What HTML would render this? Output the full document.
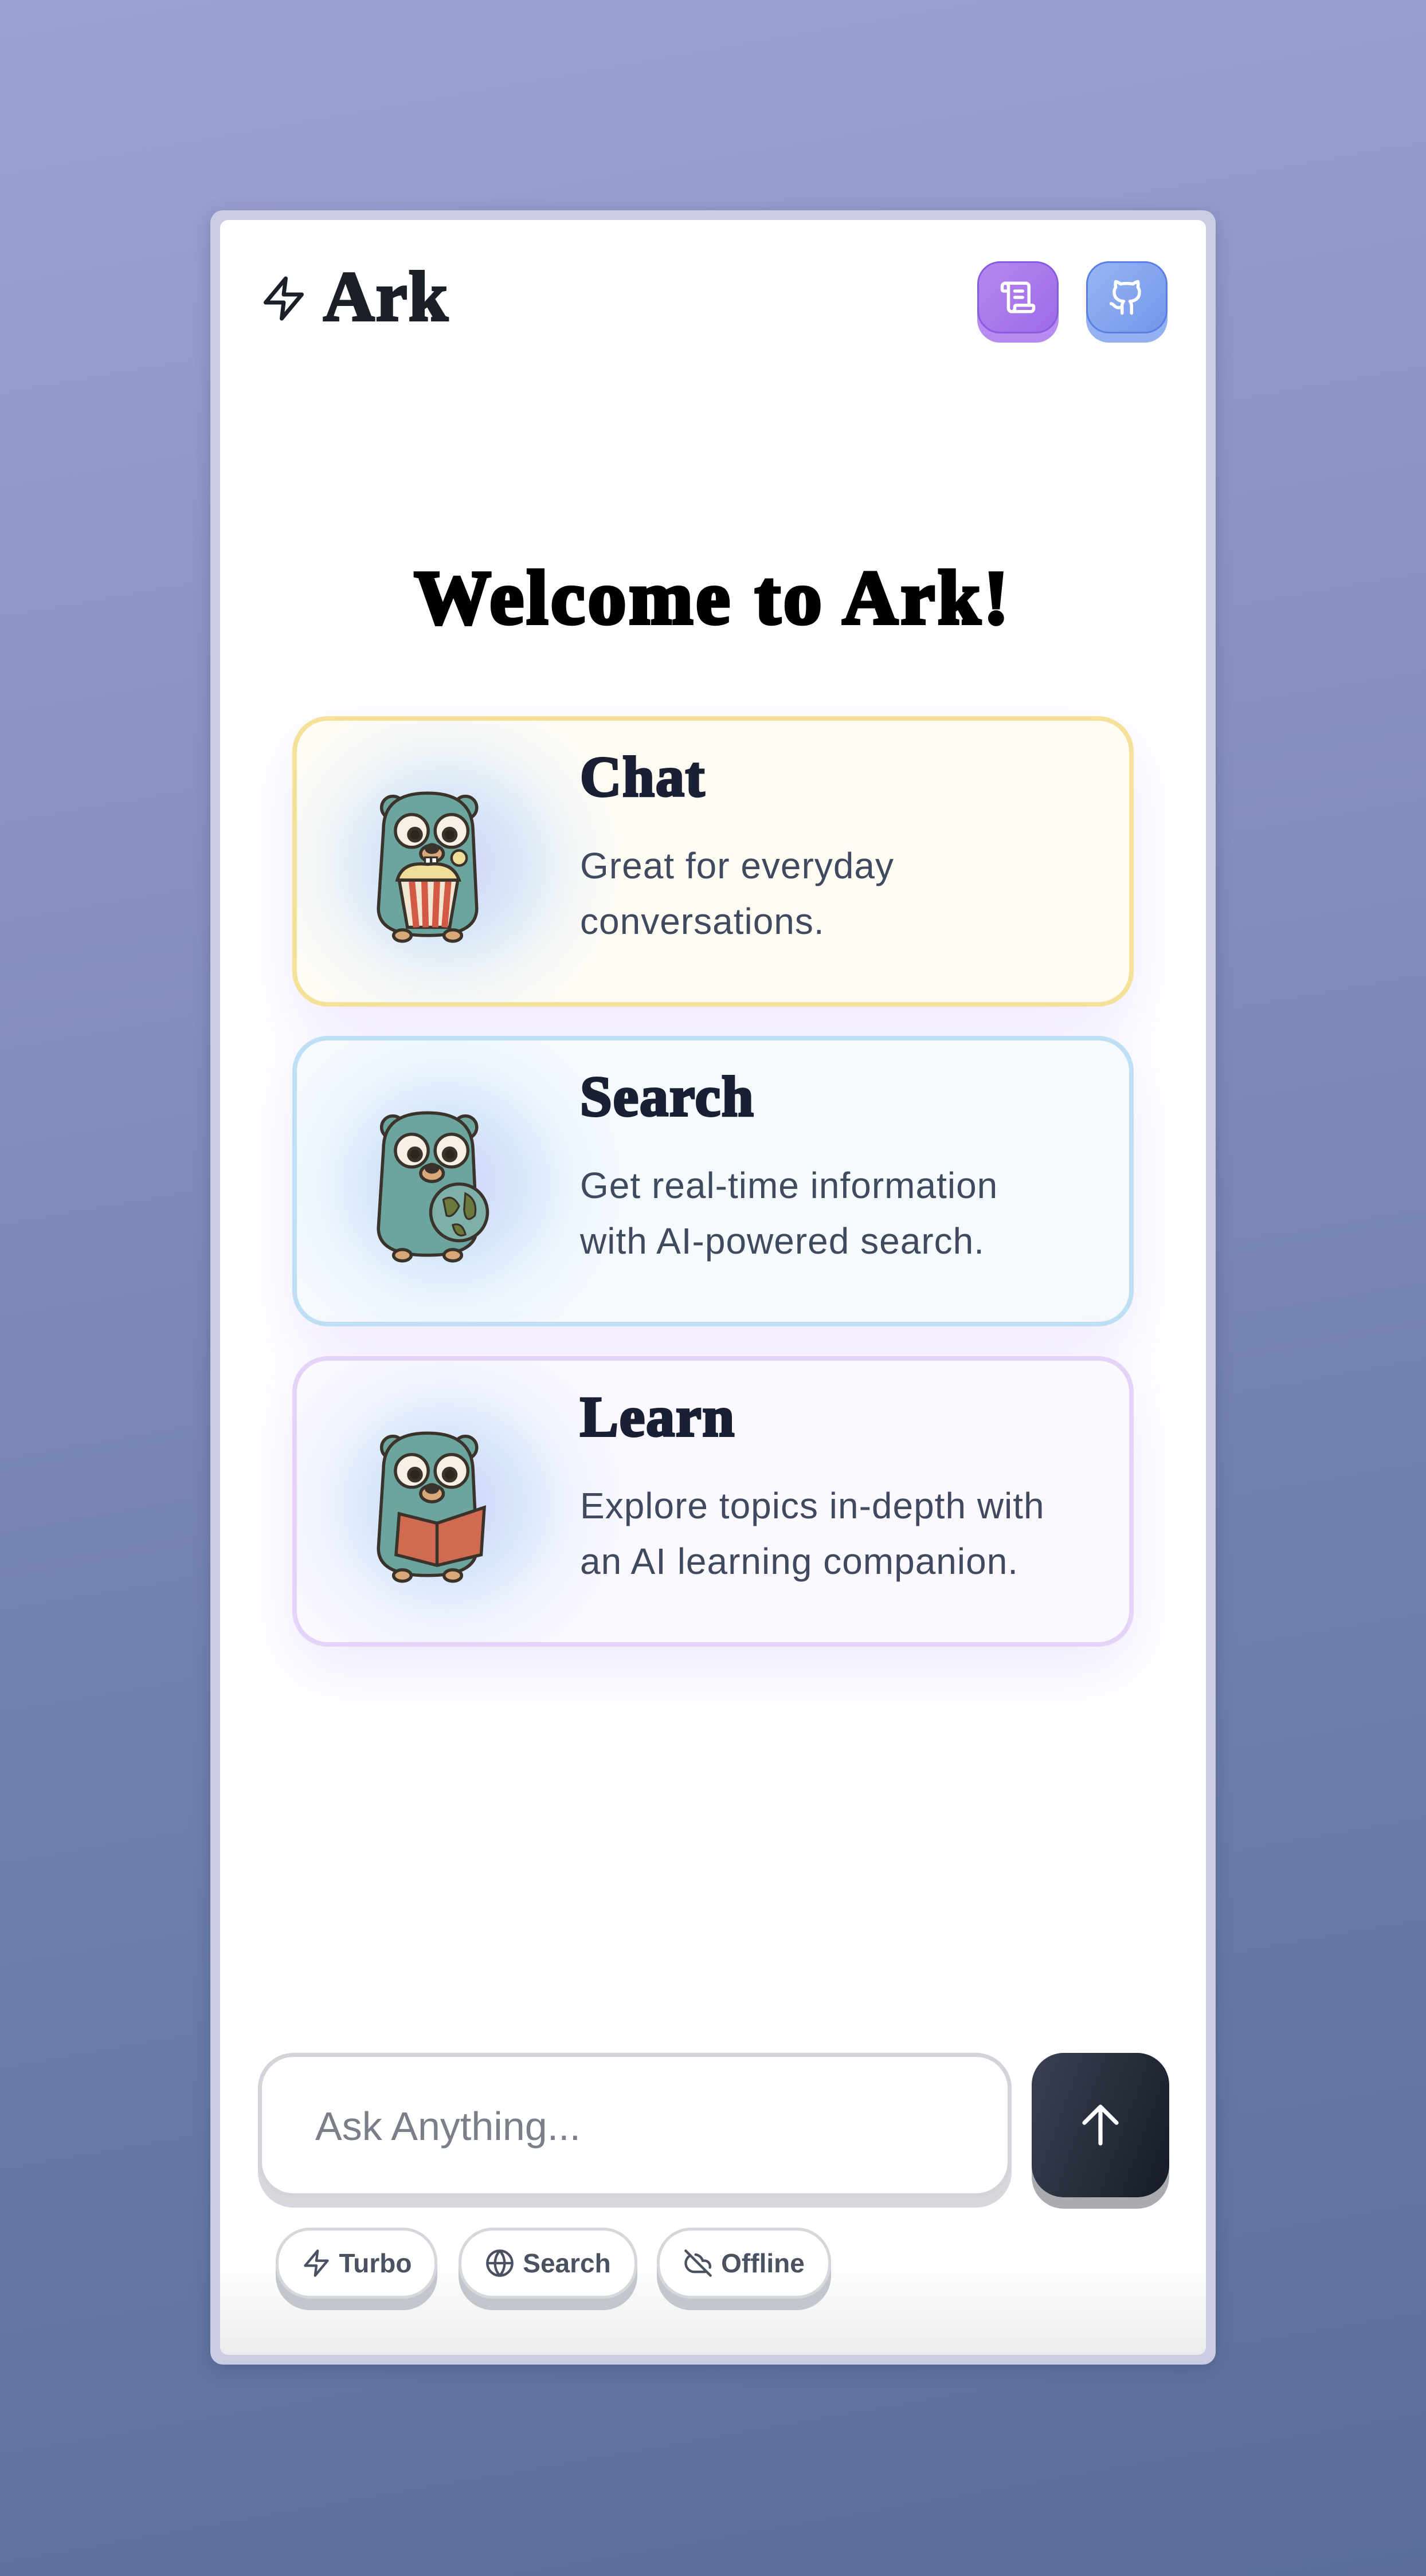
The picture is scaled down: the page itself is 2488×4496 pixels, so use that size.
<!DOCTYPE html>
<html><head><meta charset="utf-8"><style>
*{box-sizing:border-box;margin:0;padding:0}
html,body{width:2488px;height:4496px;overflow:hidden}
body{background:linear-gradient(170deg,#9ea2d2 0%,#8a92c3 30%,#6e7eae 65%,#5a6d99 100%);font-family:"Liberation Sans",sans-serif;position:relative}
.frame{position:absolute;left:367px;top:367px;width:1754px;height:3760px;border-radius:22px;background:#c9cce3;box-shadow:0 8px 30px rgba(40,50,90,.25)}
.inner{position:absolute;left:17px;top:17px;right:17px;bottom:17px;background:#fff;border-radius:14px;overflow:hidden}
.abs{position:absolute}
.logo{left:69px;top:72px;font-family:"Liberation Serif",serif;font-weight:bold;font-size:124px;color:#1b1f27;letter-spacing:2px;line-height:1;-webkit-text-stroke:4px #1b1f27}
.btn{position:absolute;top:72px;width:142px;height:142px;border-radius:40px}
.btn .face{position:absolute;left:0;top:0;width:142px;height:126px;border-radius:40px;display:flex;align-items:center;justify-content:center}
.welcome{left:0;right:0;top:582px;text-align:center;font-family:"Liberation Serif",serif;font-weight:bold;font-size:134px;color:#000;letter-spacing:5px;-webkit-text-stroke:6px #000}
.card{position:absolute;left:126px;width:1468px;height:507px;border-radius:62px;border:8px solid;overflow:hidden;box-shadow:0 40px 110px rgba(200,175,250,.28)}
.card .glow{position:absolute;left:-60px;top:-60px;width:640px;height:620px;background:radial-gradient(closest-side,rgba(205,205,250,.95) 0%,rgba(205,225,248,.75) 40%,rgba(225,238,252,.4) 70%,rgba(255,255,255,0) 100%)}
.card svg.g{position:absolute;left:118px;top:100px}
.card h2{position:absolute;left:494px;top:40px;font-family:"Liberation Serif",serif;font-weight:bold;font-size:100px;color:#1a2033;letter-spacing:2px;-webkit-text-stroke:4px #1a2033}
.card p{position:absolute;left:494px;top:205px;font-size:64px;line-height:97px;color:#404a5e;width:960px;letter-spacing:1px}
.input{position:absolute;left:66px;top:3199px;width:1315px;height:270px;border-radius:62px;background:#d6d8dd}
.input .f{position:absolute;left:0;top:0;width:1315px;height:252px;border-radius:62px;background:#fff;border:7px solid #d2d4da}
.input span{position:absolute;left:100px;top:88px;font-size:70px;color:#7a7f8a}
.send{position:absolute;left:1416px;top:3199px;width:240px;height:272px;border-radius:56px;background:#a9abb0}
.send .f{position:absolute;left:0;top:0;width:240px;height:252px;border-radius:56px;background:linear-gradient(110deg,#3a4252,#161b27);display:flex;align-items:center;justify-content:center}
.chip{position:absolute;top:3504px;height:144px;border-radius:60px;background:#c3c6cc}
.chip .f{position:absolute;left:0;top:0;right:0;height:124px;border-radius:60px;background:#fff;border:5px solid #d5d7dc;display:flex;align-items:center;justify-content:center;gap:14px;font-size:46px;font-weight:bold;color:#4a5262}
.bottomfade{position:absolute;left:0;right:0;bottom:0;height:160px;background:linear-gradient(#fff,#ececef)}
</style></head><body>
<div class="frame"><div class="inner">
 <div class="bottomfade"></div>
 <svg class="abs" style="left:69px;top:89px" width="84" height="96" viewBox="0 0 24 24" fill="none" stroke="#1b1f27" stroke-width="2" stroke-linejoin="round" stroke-linecap="round"><path d="M13 2L3 14h9l-1 8 10-12h-9l1-8z"/></svg>
 <div class="abs logo" style="left:180px">Ark</div>
 <div class="btn" style="left:1321px;background:#b98af0"><div class="face" style="background:linear-gradient(135deg,#b788ef,#9d6ae6);border:3px solid #8b5ae3">
  <svg width="66" height="66" viewBox="0 0 24 24" fill="none" stroke="#fff" stroke-width="2" stroke-linecap="round" stroke-linejoin="round"><path d="M15 12h-5M15 8h-5M19 17V5a2 2 0 0 0-2-2H4M8 21h12a2 2 0 0 0 2-2v-1a1 1 0 0 0-1-1H11a1 1 0 0 0-1 1v1a2 2 0 1 1-4 0V5a2 2 0 1 0-4 0v2a1 1 0 0 0 1 1h3"/></svg></div></div>
 <div class="btn" style="left:1511px;background:#94b1f2"><div class="face" style="background:linear-gradient(135deg,#95b6f3,#7596e9);border:3px solid #5a7fe6">
  <svg width="66" height="66" viewBox="0 0 24 24" fill="none" stroke="#fff" stroke-width="2" stroke-linecap="round" stroke-linejoin="round"><path d="M15 22v-4a4.8 4.8 0 0 0-1-3.5c3 0 6-2 6-5.5.08-1.250-.27-2.480-1-3.5.28-1.150.28-2.350 0-3.5 0 0-1 0-3 1.5-2.640-.5-5.360-.5-8 0C6 2 5 2 5 2c-.3 1.150-.3 2.350 0 3.5A5.4 5.4 0 0 0 4 9c0 3.5 3 5.5 6 5.5-.39.49-.68 1.050-.85 1.650S8.930 17.380 9 18v4M9 18c-4.510 2-5-2-7-2"/></svg></div></div>

 <div class="abs welcome">Welcome to Ark!</div>

 <div class="card" style="top:866px;border-color:#f5e29a;background:#fffcf4"><div class="glow"></div>
  <svg class="g" width="220" height="290" viewBox="0 0 200 260">
   <g stroke="#3a332b" stroke-width="5"><circle cx="45" cy="45" r="18" fill="#6ba59d"/><circle cx="160" cy="45" r="18" fill="#6ba59d"/>
   <path d="M30 80 Q30 22 100 22 Q170 22 172 80 L178 205 Q178 248 100 248 Q22 248 22 205 Z" fill="#6ba59d"/>
   <circle cx="75" cy="82" r="26" fill="#f6f1e4"/><circle cx="138" cy="82" r="26" fill="#f6f1e4"/>
   <circle cx="80" cy="88" r="10" fill="#2c2620"/><circle cx="135" cy="88" r="10" fill="#2c2620"/>
   <ellipse cx="107" cy="118" rx="18" ry="13" fill="#d9a878"/><ellipse cx="107" cy="110" rx="9" ry="6" fill="#3a332b"/>
   <rect x="96" y="124" width="9" height="12" fill="#fff" stroke-width="3"/><rect x="106" y="124" width="9" height="12" fill="#fff" stroke-width="3"/>
   <ellipse cx="60" cy="248" rx="14" ry="9" fill="#d9a878"/><ellipse cx="140" cy="248" rx="14" ry="9" fill="#d9a878"/>
   <path d="M55 160 L68 235 L135 235 L148 160 Z" fill="#f2e6d2"/>
   <path d="M75 160 L82 235 M95 160 L97 235 M115 160 L112 235 M133 160 L127 235" stroke="#d25a45" stroke-width="10"/>
   <path d="M52 160 Q60 130 100 135 Q140 130 150 160 Z" fill="#f1dd9a"/>
   <circle cx="150" cy="125" r="12" fill="#f1dd9a" stroke-width="4"/></g>
  </svg>
  <h2>Chat</h2><p>Great for everyday<br>conversations.</p></div>

 <div class="card" style="top:1424px;border-color:#bfe0f4;background:#f5fafe"><div class="glow"></div>
  <svg class="g" width="220" height="290" viewBox="0 0 200 260">
   <g stroke="#3a332b" stroke-width="5"><circle cx="45" cy="45" r="18" fill="#6ba59d"/><circle cx="160" cy="45" r="18" fill="#6ba59d"/>
   <path d="M30 80 Q30 22 100 22 Q170 22 172 80 L178 205 Q178 248 100 248 Q22 248 22 205 Z" fill="#6ba59d"/>
   <circle cx="75" cy="82" r="26" fill="#f6f1e4"/><circle cx="138" cy="82" r="26" fill="#f6f1e4"/>
   <circle cx="80" cy="88" r="10" fill="#2c2620"/><circle cx="135" cy="88" r="10" fill="#2c2620"/>
   <ellipse cx="107" cy="118" rx="18" ry="13" fill="#d9a878"/><ellipse cx="107" cy="110" rx="9" ry="6" fill="#3a332b"/>
   <ellipse cx="60" cy="248" rx="14" ry="9" fill="#d9a878"/><ellipse cx="140" cy="248" rx="14" ry="9" fill="#d9a878"/>
   <circle cx="150" cy="180" r="45" fill="#7fb0a8"/>
   <path d="M125 160 Q140 150 150 170 Q140 190 130 185 Z M160 150 Q180 160 175 185 Q160 200 158 175 Z M140 200 Q155 195 160 215 Q145 222 140 200 Z" fill="#6b7a3a" stroke-width="3"/></g>
  </svg>
  <h2>Search</h2><p>Get real-time information<br>with AI-powered search.</p></div>

 <div class="card" style="top:1983px;border-color:#e6d3fa;background:#fbf8ff"><div class="glow"></div>
  <svg class="g" width="220" height="290" viewBox="0 0 200 260">
   <g stroke="#3a332b" stroke-width="5"><circle cx="45" cy="45" r="18" fill="#6ba59d"/><circle cx="160" cy="45" r="18" fill="#6ba59d"/>
   <path d="M30 80 Q30 22 100 22 Q170 22 172 80 L178 205 Q178 248 100 248 Q22 248 22 205 Z" fill="#6ba59d"/>
   <circle cx="75" cy="82" r="26" fill="#f6f1e4"/><circle cx="138" cy="82" r="26" fill="#f6f1e4"/>
   <circle cx="80" cy="88" r="10" fill="#2c2620"/><circle cx="135" cy="88" r="10" fill="#2c2620"/>
   <ellipse cx="107" cy="118" rx="18" ry="13" fill="#d9a878"/><ellipse cx="107" cy="110" rx="9" ry="6" fill="#3a332b"/>
   <ellipse cx="60" cy="248" rx="14" ry="9" fill="#d9a878"/><ellipse cx="140" cy="248" rx="14" ry="9" fill="#d9a878"/>
   <path d="M55 150 L115 165 L190 140 L185 215 L115 232 L50 215 Z" fill="#d06a50"/>
   <path d="M115 165 L115 232"/></g>
  </svg>
  <h2>Learn</h2><p>Explore topics in-depth with<br>an AI learning companion.</p></div>

 <div class="input"><div class="f"></div><span>Ask Anything...</span></div>
 <div class="send"><div class="f"><svg width="96" height="96" viewBox="0 0 24 24" fill="none" stroke="#fff" stroke-width="1.8" stroke-linecap="round" stroke-linejoin="round"><path d="M12 20V4M5 11l7-7 7 7"/></svg></div></div>

 <div class="chip" style="left:97px;width:282px"><div class="f">
  <svg width="52" height="52" viewBox="0 0 24 24" fill="none" stroke="#4a5262" stroke-width="2" stroke-linejoin="round"><path d="M13 2L3 14h9l-1 8 10-12h-9l1-8z"/></svg>Turbo</div></div>
 <div class="chip" style="left:416px;width:312px"><div class="f">
  <svg width="52" height="52" viewBox="0 0 24 24" fill="none" stroke="#4a5262" stroke-width="2"><circle cx="12" cy="12" r="10"/><path d="M2 12h20M12 2a15 15 0 0 1 0 20M12 2a15 15 0 0 0 0 20"/></svg>Search</div></div>
 <div class="chip" style="left:762px;width:304px"><div class="f">
  <svg width="52" height="52" viewBox="0 0 24 24" fill="none" stroke="#4a5262" stroke-width="2" stroke-linecap="round"><path d="M2 2l20 20M5.800 5.800A7 7 0 0 0 9 19h8.500a4.500 4.500 0 0 0 1.300-.2M21.500 15.500A4.500 4.500 0 0 0 17.500 10h-1.800A7 7 0 0 0 10 5.100"/></svg>Offline</div></div>
</div></div>
</body></html>
